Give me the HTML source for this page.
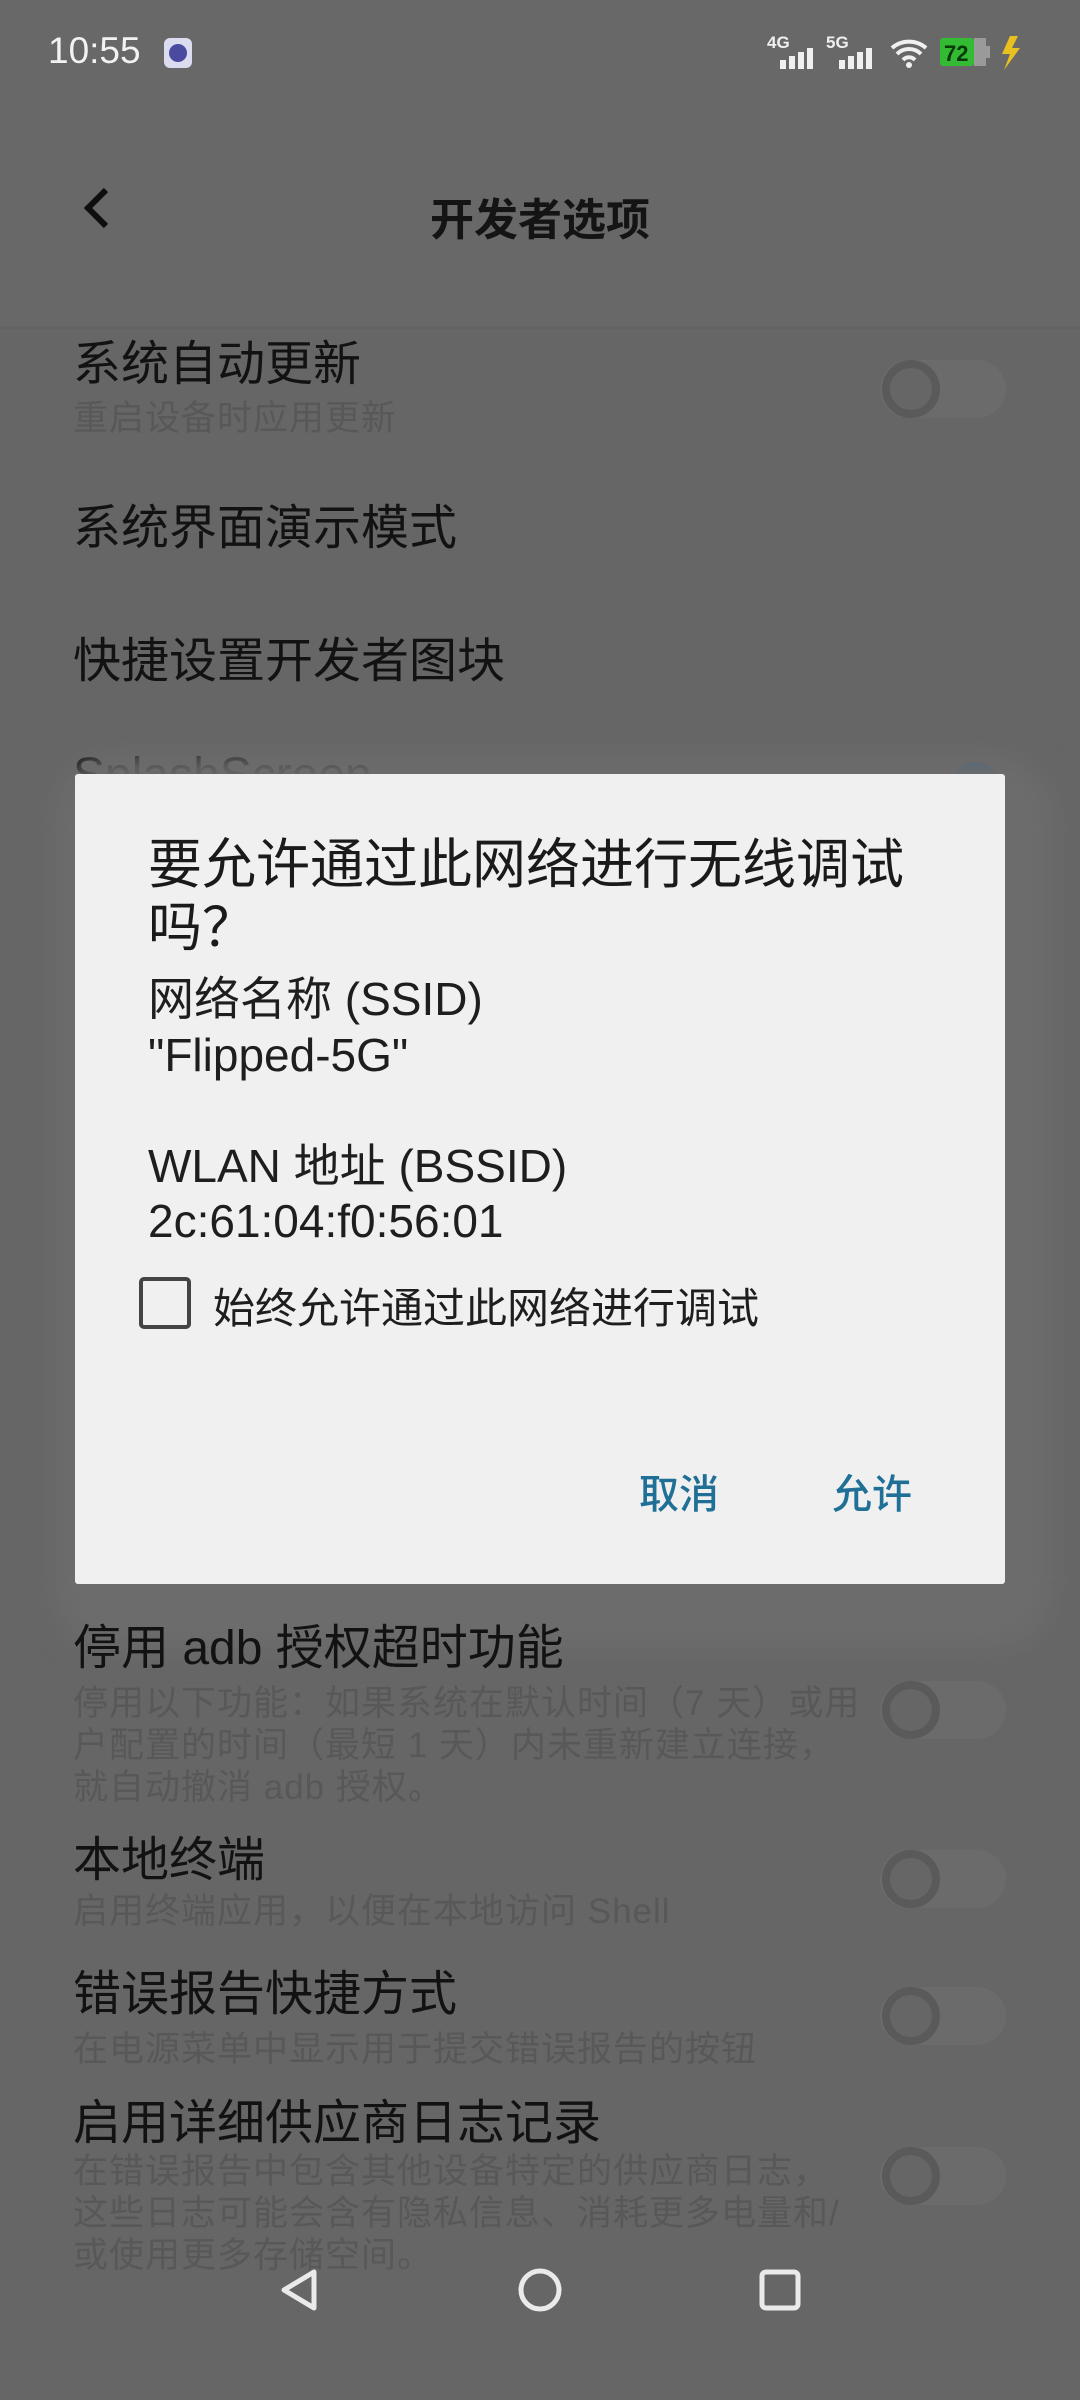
<!DOCTYPE html>
<html><head><meta charset="utf-8">
<style>
*{margin:0;padding:0;box-sizing:border-box}
body{width:1080px;height:2400px;background:#666;position:relative;overflow:hidden;font-family:"Liberation Sans","Noto Sans CJK SC",sans-serif}
.a{position:absolute;white-space:nowrap}
.t{font-size:48px;color:#121212;line-height:1}
.s{font-size:35px;color:#585858;line-height:42px;letter-spacing:1px}
.tg{position:absolute;left:880px;width:126px;height:58px;border-radius:29px;background:#6b6b6b}
.tg:before{content:"";position:absolute;left:2px;top:0;width:58px;height:58px;border-radius:50%;border:8px solid #5a5a5a;box-sizing:border-box;background:#666}
.d{font-size:46px;color:#1e1e1e;line-height:55px}
</style></head><body>
<div style="position:absolute;left:0;top:0;width:1080px;height:329px;background:#686868;border-bottom:3px solid #636363"></div>
<div class="a" style="left:48px;top:30px;font-size:37px;color:#f2f2f2">10:55</div>
<div class="a" style="left:164px;top:38px;width:28px;height:30px;border-radius:6px;background:#dcdcf0"><div style="position:absolute;left:5px;top:6px;width:18px;height:18px;border-radius:50%;background:#4a4aa0"></div></div>
<svg class="a" style="left:764px;top:32px" width="300" height="44" viewBox="0 0 300 44">
<text x="3" y="16" font-size="17" font-weight="bold" fill="#f0f0f0" font-family="Liberation Sans">4G</text>
<rect x="16" y="28" width="6" height="9" fill="#f0f0f0"/><rect x="25" y="24" width="6" height="13" fill="#f0f0f0"/><rect x="34" y="20" width="6" height="17" fill="#f0f0f0"/><rect x="43" y="16" width="6" height="21" fill="#f0f0f0"/>
<text x="62" y="16" font-size="17" font-weight="bold" fill="#f0f0f0" font-family="Liberation Sans">5G</text>
<rect x="75" y="28" width="6" height="9" fill="#f0f0f0"/><rect x="84" y="24" width="6" height="13" fill="#f0f0f0"/><rect x="93" y="20" width="6" height="17" fill="#f0f0f0"/><rect x="102" y="16" width="6" height="21" fill="#f0f0f0"/>
<path d="M128 16a26 26 0 0 1 34 0M133 22a17 17 0 0 1 24 0M139 28a8 8 0 0 1 12 0" stroke="#f0f0f0" stroke-width="4" fill="none"/><circle cx="145" cy="33" r="3" fill="#f0f0f0"/>
<rect x="176" y="6" width="34" height="28" rx="3" fill="#33bb33"/><rect x="210" y="6" width="12" height="28" fill="#9a9a9a"/><rect x="222" y="14" width="4" height="12" fill="#9a9a9a"/>
<text x="180" y="29" font-size="22" font-weight="bold" fill="#0a3a0a" font-family="Liberation Sans">72</text>
<path d="M246 4l-8 18h8l-6 16l16-22h-8l6-12z" fill="#e8c020"/>
</svg>
<svg class="a" style="left:78px;top:184px" width="36" height="48"><path d="M28 6L10 24l18 18" stroke="#0e0e0e" stroke-width="6" fill="none"/></svg>
<div class="a" style="left:0;width:1080px;text-align:center;top:184px;font-size:44px;font-weight:bold;color:#141414">开发者选项</div>

<div class="a t" style="left:73px;top:341px">系统自动更新</div>
<div class="a s" style="left:73px;top:398px">重启设备时应用更新</div>
<div class="tg" style="top:360px"></div>
<div class="a t" style="left:73px;top:505px">系统界面演示模式</div>
<div class="a t" style="left:73px;top:638px">快捷设置开发者图块</div>
<div class="a t" style="left:73px;top:752px">SplashScreen</div>
<div class="a" style="left:950px;top:762px;width:50px;height:50px;border-radius:50%;background:#35608a"></div>

<div style="position:absolute;left:54px;top:755px;width:1000px;height:895px;border-radius:60px;background:#6c6c6c;filter:blur(14px)"></div>
<div style="position:absolute;left:75px;top:774px;width:930px;height:810px;background:#f0f0f0;border-radius:3px"></div>
<div class="a" style="left:148px;top:834px;font-size:54px;color:#1a1a1a;line-height:63px;white-space:normal;width:820px">要允许通过此网络进行无线调试吗？</div>
<div class="a d" style="left:148px;top:972px">网络名称 (SSID)</div>
<div class="a d" style="left:148px;top:1028px">"Flipped-5G"</div>
<div class="a d" style="left:148px;top:1139px">WLAN 地址 (BSSID)</div>
<div class="a d" style="left:148px;top:1194px">2c:61:04:f0:56:01</div>
<div class="a" style="left:139px;top:1277px;width:52px;height:52px;border:4px solid #444;border-radius:5px"></div>
<div class="a" style="left:213px;top:1275px;font-size:42px;color:#1e1e1e">始终允许通过此网络进行调试</div>
<div class="a" style="left:639px;top:1462px;font-size:40px;color:#1f6f96;font-weight:500">取消</div>
<div class="a" style="left:832px;top:1462px;font-size:40px;color:#1f6f96;font-weight:500">允许</div>

<div class="a t" style="left:73px;top:1625px">停用 adb 授权超时功能</div>
<div class="a s" style="left:73px;top:1683px;white-space:normal;width:800px">停用以下功能：如果系统在默认时间（7 天）或用<br>户配置的时间（最短 1 天）内未重新建立连接，<br>就自动撤消 adb 授权。</div>
<div class="tg" style="top:1681px"></div>
<div class="a t" style="left:73px;top:1837px">本地终端</div>
<div class="a s" style="left:73px;top:1891px">启用终端应用，以便在本地访问 Shell</div>
<div class="tg" style="top:1850px"></div>
<div class="a t" style="left:73px;top:1971px">错误报告快捷方式</div>
<div class="a s" style="left:73px;top:2029px">在电源菜单中显示用于提交错误报告的按钮</div>
<div class="tg" style="top:1987px"></div>
<div class="a t" style="left:73px;top:2100px">启用详细供应商日志记录</div>
<div class="a s" style="left:73px;top:2151px;white-space:normal;width:800px">在错误报告中包含其他设备特定的供应商日志，<br>这些日志可能会含有隐私信息、消耗更多电量和/<br>或使用更多存储空间。</div>
<div class="tg" style="top:2147px"></div>

<div style="position:absolute;left:0;top:2275px;width:1080px;height:125px;background:#666"></div>
<svg class="a" style="left:0;top:2250px" width="1080" height="80">
<path d="M314 22L284 40l30 18z" stroke="#eaeaea" stroke-width="5" fill="none" stroke-linejoin="round"/>
<circle cx="540" cy="40" r="19" stroke="#eaeaea" stroke-width="5" fill="none"/>
<rect x="762" y="22" width="36" height="36" rx="4" stroke="#eaeaea" stroke-width="5" fill="none"/>
</svg>
</body></html>
